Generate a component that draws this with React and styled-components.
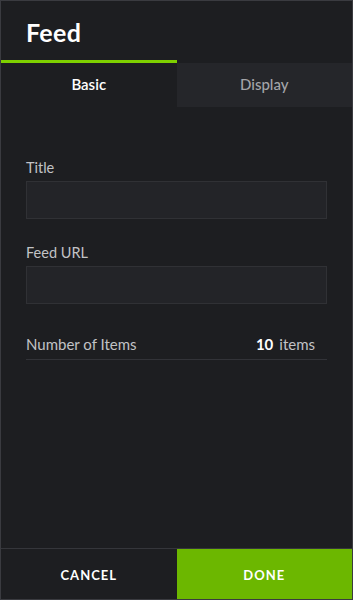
import React from 'react';
import styled, { createGlobalStyle } from 'styled-components';

const GlobalStyle = createGlobalStyle`
  html, body {
    margin: 0;
    padding: 0;
    background: #1d1e21;
  }
  * {
    box-sizing: border-box;
  }
`;

const Panel = styled.div`
  width: 353px;
  height: 600px;
  display: flex;
  flex-direction: column;
  background: #1d1e21;
  border: 1px solid #3a3b40;
  font-family: Lato, "Noto Sans", sans-serif;
  color: #fff;
  overflow: hidden;
`;

const Header = styled.h1`
  margin: 0;
  height: 59px;
  padding: 16px 0 0 25px;
  font-size: 25px;
  font-weight: 700;
  letter-spacing: 0.3px;
`;

const Tabs = styled.div`
  display: flex;
  height: 47px;
`;

const Tab = styled.div`
  flex: 1;
  display: flex;
  align-items: center;
  justify-content: center;
  font-size: 15px;
  font-weight: ${p => (p.$active ? 600 : 500)};
  color: ${p => (p.$active ? '#ffffff' : '#a3a4a8')};
  background: ${p => (p.$active ? '#1d1e21' : '#25262a')};
  border-top: 3px solid ${p => (p.$active ? '#7ed000' : '#1d1e21')};
  padding-bottom: 2px;
`;

const Body = styled.div`
  flex: 1;
  display: flex;
  flex-direction: column;
  padding: 52px 25px 0;
`;

const Field = styled.div`
  display: flex;
  flex-direction: column;
  margin-bottom: 25px;
`;

const Label = styled.label`
  font-size: 14.5px;
  color: #c2c3c6;
  margin-bottom: 5px;
  line-height: 17px;
`;

const Input = styled.div`
  height: 38px;
  background: #232428;
  border: 1px solid #303135;
`;

const Row = styled.div`
  display: flex;
  justify-content: space-between;
  align-items: center;
  height: 31px;
  border-bottom: 1px solid #323338;
  font-size: 15px;
  color: #c2c3c6;
`;

const Value = styled.span`
  display: flex;
  align-items: baseline;
  gap: 6px;
  padding-right: 12px;
  b {
    color: #fff;
    font-weight: 700;
    font-size: 15px;
  }
`;

const Footer = styled.div`
  display: flex;
  height: 51px;
  border-top: 1px solid #35363b;
`;

const FooterButton = styled.button`
  flex: 1;
  border: none;
  margin: 0;
  font-family: Lato, "Noto Sans", sans-serif;
  font-size: 13px;
  font-weight: 700;
  letter-spacing: 1px;
  color: #fff;
  background: ${p => (p.$primary ? '#6cb700' : '#1d1e21')};
  padding-top: 2px;
`;

export default function App() {
  return (
    <>
      <GlobalStyle />
      <Panel>
        <Header>Feed</Header>
        <Tabs>
          <Tab $active>Basic</Tab>
          <Tab>Display</Tab>
        </Tabs>
        <Body>
          <Field>
            <Label>Title</Label>
            <Input />
          </Field>
          <Field>
            <Label>Feed URL</Label>
            <Input />
          </Field>
          <Row>
            <span>Number of Items</span>
            <Value>
              <b>10</b> items
            </Value>
          </Row>
        </Body>
        <Footer>
          <FooterButton>CANCEL</FooterButton>
          <FooterButton $primary>DONE</FooterButton>
        </Footer>
      </Panel>
    </>
  );
}
